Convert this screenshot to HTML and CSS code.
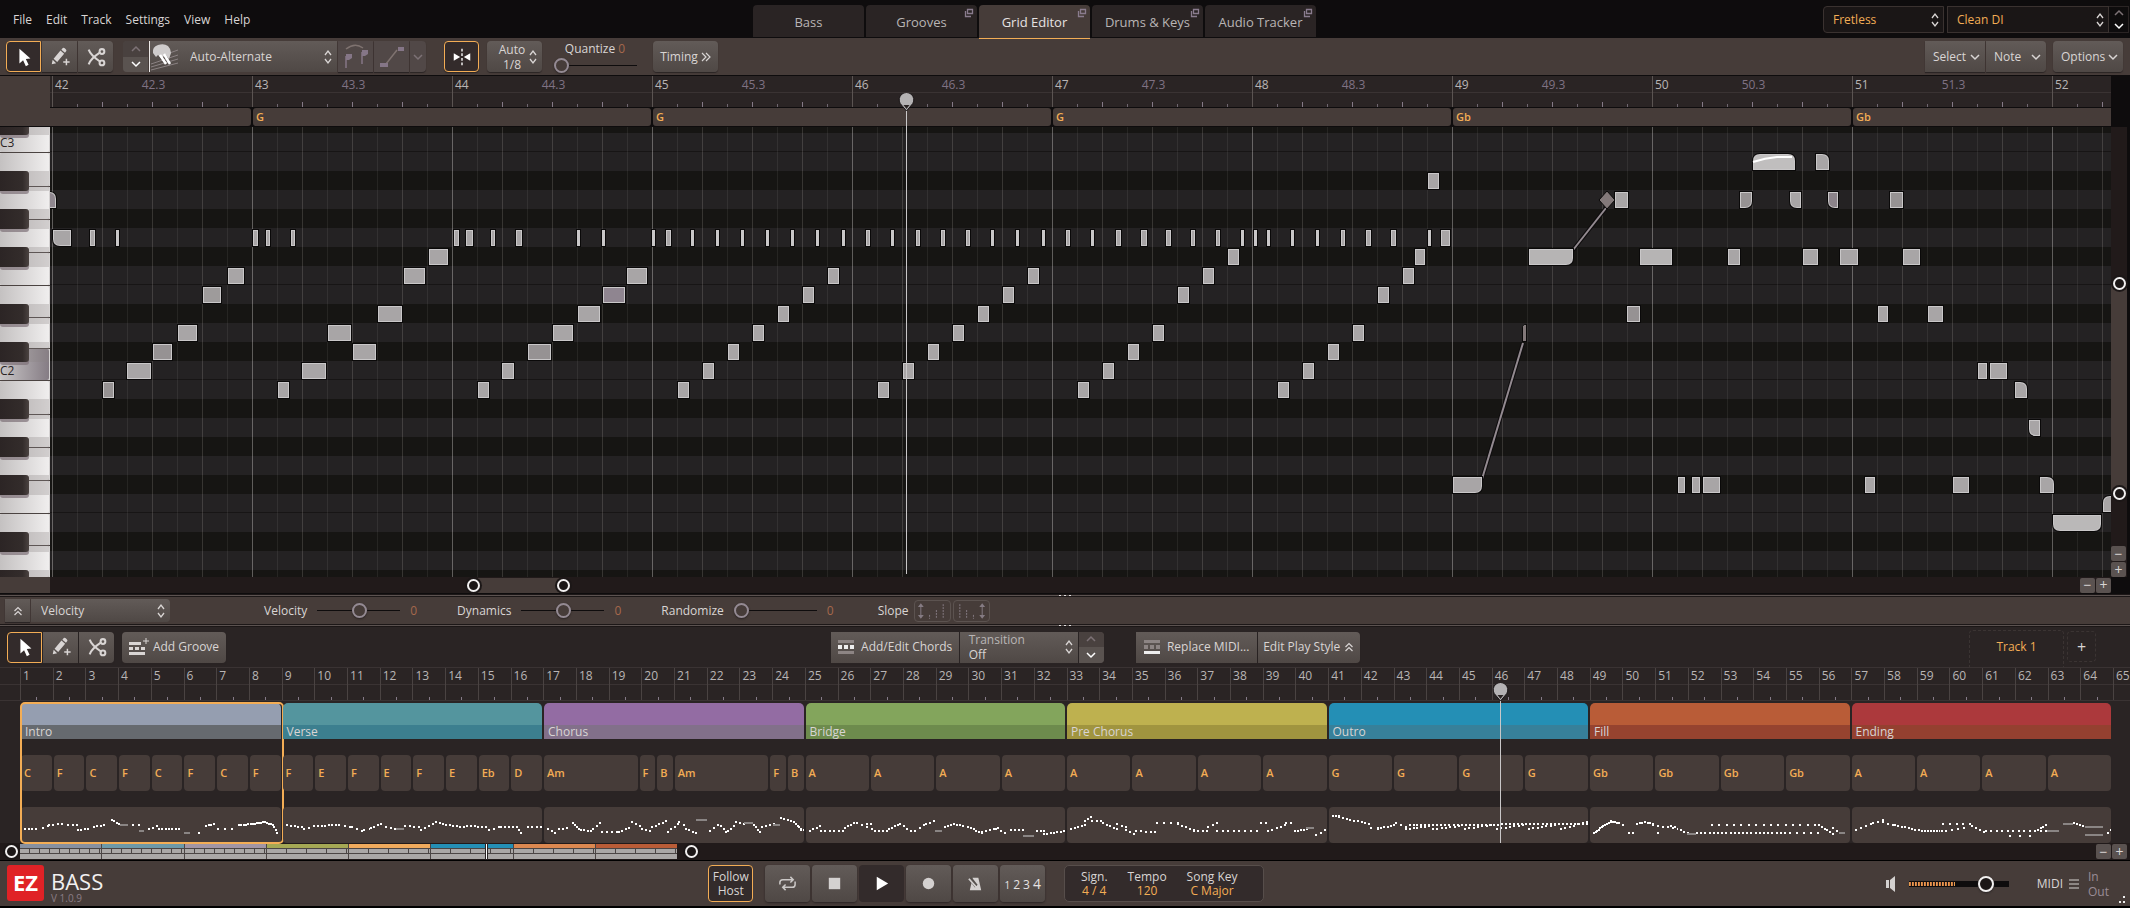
FILE: index.html
```html
<!DOCTYPE html>
<html lang="en">
<head>
<meta charset="utf-8">
<title>EZ Bass - Grid Editor</title>
<link rel="stylesheet" href="styles.css">
</head>
<body>
<svg class="defs" aria-hidden="true">
  <symbol id="i-arrow" viewBox="0 0 24 24"><path d="M7 3v16l4-3.500 3 6.500 3-1.500-3-6.300 5-.6z" fill="#fff"/></symbol>
  <symbol id="i-pencil" viewBox="0 0 24 24"><path d="M3 20l1-5 3.800 3.800zM5 13.800L12.500 5l4 3.500-7.600 9zM13.500 4L15 2.300q1-.8 2.200.2l1.300 1.200q1 1 .2 2.100L17.400 7.400z" fill="#d9d5d4"/><path d="M19 14v7M15.500 17.500h7" stroke="#d9d5d4" stroke-width="1.600"/></symbol>
  <symbol id="i-scissors" viewBox="0 0 24 24"><g fill="none" stroke="#d9d5d4" stroke-width="2.200"><path d="M4 4q2 6 13 13.500M4 20Q6 14 16.500 7"/><circle cx="18.500" cy="6" r="2.600"/><circle cx="18.500" cy="18.500" r="2.600"/></g></symbol>
  <symbol id="i-up" viewBox="0 0 12 12"><path d="M2 8l4-4 4 4" fill="none" stroke="currentColor" stroke-width="1.500"/></symbol>
  <symbol id="i-down" viewBox="0 0 12 12"><path d="M2 4l4 4 4-4" fill="none" stroke="currentColor" stroke-width="1.500"/></symbol>
  <symbol id="i-updown" viewBox="0 0 8 16"><path d="M1 6l3-4 3 4M1 10l3 4 3-4" fill="none" stroke="#d9d5d4" stroke-width="1.300"/></symbol>
  <symbol id="i-dblup" viewBox="0 0 10 10"><path d="M1.500 5L5 1.500 8.500 5M1.500 9L5 5.500 8.500 9" fill="none" stroke="#d9d5d4" stroke-width="1.200"/></symbol>
  <symbol id="i-dblright" viewBox="0 0 10 10"><path d="M1 1l4 4-4 4M5 1l4 4-4 4" fill="none" stroke="#d9d5d4" stroke-width="1.200"/></symbol>
  <symbol id="i-pop" viewBox="0 0 10 10"><path d="M3.500 1.500h5v4h-5zM1.500 3v5.500H7" fill="none" stroke="#8a7c8e" stroke-width="1.300"/></symbol>
  <symbol id="i-pin" viewBox="0 0 16 18"><path d="M8 18L1.700 10.500A7.300 7.300 0 1 1 14.300 10.500z" fill="#b4b2b3" stroke="#1a1617"/><path d="M5 12h6l-3 4z" fill="#2a2424"/></symbol>
</svg>

<header class="titlebar">
  <nav class="menu">
    <button>File</button><button>Edit</button><button>Track</button><button>Settings</button><button>View</button><button>Help</button>
  </nav>
  <div class="tabs" role="tablist">
    <button class="tab" role="tab">Bass</button>
    <button class="tab" role="tab">Grooves<svg class="pop"><use href="#i-pop"/></svg></button>
    <button class="tab active" role="tab" aria-selected="true">Grid Editor<svg class="pop"><use href="#i-pop"/></svg></button>
    <button class="tab" role="tab">Drums &amp; Keys<svg class="pop"><use href="#i-pop"/></svg></button>
    <button class="tab" role="tab">Audio Tracker<svg class="pop"><use href="#i-pop"/></svg></button>
  </div>
  <div class="presets">
    <div class="pick preset-a"><select aria-label="Instrument"><option>Fretless</option></select><svg class="ud"><use href="#i-updown"/></svg></div>
    <div class="pick preset-b"><select aria-label="Preset"><option>Clean DI</option></select><svg class="ud"><use href="#i-updown"/></svg></div>
    <div class="spin dark"><button class="off" aria-label="Previous preset"><svg class="chev"><use href="#i-up"/></svg></button><button aria-label="Next preset"><svg class="chev"><use href="#i-down"/></svg></button></div>
  </div>
</header>

<section class="toolbar">
  <div class="group">
    <button class="btn tool on" aria-label="Select tool"><svg class="ic"><use href="#i-arrow"/></svg></button>
    <button class="btn tool" aria-label="Pencil tool"><svg class="ic"><use href="#i-pencil"/></svg></button>
    <button class="btn tool" aria-label="Split tool"><svg class="ic"><use href="#i-scissors"/></svg></button>
  </div>
  <div class="group articulation">
    <div class="spin"><button class="off" aria-label="Previous articulation"><svg class="chev"><use href="#i-up"/></svg></button><button aria-label="Next articulation"><svg class="chev"><use href="#i-down"/></svg></button></div>
    <div class="pick stroke-pick">
      <svg class="hand" viewBox="0 0 30 28"><g stroke="#8b8283" stroke-width="1"><path d="M1 21l27-9M1 24l27-8M1 27l27-7M14 12l14-5"/></g><path d="M3 10q-1-6 5-8 6-2 10 1 3 3 3 7l-2 6-4-5-3 5-4-4-2 2z" fill="#cfcccc"/><path d="M10 12l6 9M14 11l6 10" stroke="#fff" stroke-width="2.500"/></svg>
      <select aria-label="Articulation"><option>Auto-Alternate</option></select><svg class="ud"><use href="#i-updown"/></svg>
    </div>
    <button class="btn dim" aria-label="Legato"><svg class="ic wide" viewBox="0 0 28 28"><path d="M4 6q9-7 17-1" fill="none" stroke="#7f7370" stroke-width="1.500"/><g stroke="#857687" stroke-width="1.500"><path d="M4 25V13M20 21V9"/></g><g fill="#857687"><path d="M4 11h6v4l-3 2H4zM20 7h6v4l-3 2h-3z"/></g></svg></button>
    <button class="btn dim" aria-label="Slide"><svg class="ic wide" viewBox="0 0 28 28"><path d="M8 21L19 7" stroke="#7f7370" stroke-width="1.500"/><path d="M2 20h8v4H2zM20 4h6v4h-6z" fill="#857687"/></svg></button>
    <button class="btn dim narrow" aria-label="More"><svg class="chev"><use href="#i-down"/></svg></button>
  </div>
  <button class="btn tool on snap" aria-label="Snap"><svg class="ic" viewBox="0 0 24 24"><path d="M3 8v8l7-4zM21 8v8l-7-4z" fill="#fff"/><path d="M12 3v18" stroke="#fff" stroke-width="1.500" stroke-dasharray="3 2"/></svg></button>
  <div class="btn stack auto"><label for="grid">Auto</label><select id="grid"><option>1/8</option></select><svg class="ud"><use href="#i-updown"/></svg></div>
  <div class="quantize"><label for="q">Quantize <output>0</output></label><input id="q" type="range" value="0"></div>
  <button class="btn timing">Timing <svg class="dbl"><use href="#i-dblright"/></svg></button>
  <div class="right">
    <div class="group"><button class="btn drop">Select<svg class="chev"><use href="#i-down"/></svg></button><button class="btn drop">Note<svg class="chev"><use href="#i-down"/></svg></button></div>
    <button class="btn drop options">Options<svg class="chev"><use href="#i-down"/></svg></button>
  </div>
</section>

<main class="editor">
  <div class="ruler-row"><div class="corner"></div><div class="ruler" id="ruler"></div><div class="gutter"></div></div>
  <div class="chord-row"><div class="chordline"><span class="seg first"></span><span class="seg">G</span><span class="seg">G</span><span class="seg">G</span><span class="seg">Gb</span><span class="seg last">Gb</span></div><div class="gutter"></div></div>
  <div class="roll-row">
    <svg class="keys" id="keys"></svg>
    <div class="roll"><svg class="notes" id="notes"></svg></div>
    <div class="vscroll">
      <div class="vthumb"><button class="knob" aria-label="Zoom top"></button><button class="knob" aria-label="Zoom bottom"></button></div>
      <div class="zoom col"><button>−</button><button>+</button></div>
    </div>
  </div>
  <div class="hscroll-row"><div class="corner"></div><div class="hscroll"><div class="hthumb"><button class="knob" aria-label="Zoom left"></button><button class="knob" aria-label="Zoom right"></button></div><div class="zoom"><button>−</button><button>+</button></div></div><div class="gutter"></div></div>
  <div class="playhead"><svg class="pin"><use href="#i-pin"/></svg></div>
</main>

<div class="splitter"><i></i><i></i><i></i></div>
<section class="velocity">
  <div class="group">
    <button class="btn vexp" aria-label="Expand"><svg class="dbl"><use href="#i-dblup"/></svg></button>
    <div class="pick vel-pick"><select aria-label="Lane"><option>Velocity</option></select><svg class="ud"><use href="#i-updown"/></svg></div>
  </div>
  <div class="param p1"><label for="v">Velocity</label><input id="v" type="range" value="51"><output>0</output></div>
  <div class="param"><label for="d">Dynamics</label><input id="d" type="range" value="51"><output>0</output></div>
  <div class="param p3"><label for="r">Randomize</label><input id="r" type="range" value="0"><output>0</output></div>
  <div class="slope"><span>Slope</span>
    <button aria-label="Slope up"><svg viewBox="0 0 36 20"><g stroke="#857b83" fill="#857b83"><path d="M6 4v12"/><path d="M3 6l3-4 3 4zM3 14l3 4 3-4z" stroke="none"/><path d="M15 14v4M22 9v9M29 3v15" stroke-dasharray="2 1"/></g></svg></button>
    <button aria-label="Slope down"><svg viewBox="0 0 36 20"><g stroke="#857b83" fill="#857b83"><path d="M29 4v12"/><path d="M26 6l3-4 3 4zM26 14l3 4 3-4z" stroke="none"/><path d="M6 3v15M13 9v9M20 14v4" stroke-dasharray="2 1"/></g></svg></button>
  </div>
</section>
<div class="splitter"><i></i><i></i><i></i></div>

<section class="song">
  <div class="songbar">
    <div class="left">
      <div class="group">
        <button class="btn tool on" aria-label="Select tool"><svg class="ic"><use href="#i-arrow"/></svg></button>
        <button class="btn tool" aria-label="Pencil tool"><svg class="ic"><use href="#i-pencil"/></svg></button>
        <button class="btn tool" aria-label="Split tool"><svg class="ic"><use href="#i-scissors"/></svg></button>
      </div>
      <button class="btn groove"><svg class="rows" viewBox="0 0 20 20"><path d="M0 5h12v3H0zM0 15h16v3H0zM0 10h4v3H0zM6 10h4v3H6zM12 10h4v3h-4z" fill="#d9d5d4"/><path d="M17 1v6M14 4h6" stroke="#d9d5d4"/></svg>Add Groove</button>
    </div>
    <div class="mid">
      <div class="group">
        <button class="btn chords"><svg class="rows" viewBox="0 0 20 20"><path d="M1 3h16v3H1zM1 14h16v3H1z" fill="#8d8584"/><path d="M1 8h4v4H1zM7 8h4v4H7zM13 8h4v4h-4z" fill="#eee"/></svg>Add/Edit Chords</button>
        <div class="btn stack transition"><label for="tr">Transition</label><select id="tr"><option>Off</option></select><svg class="ud"><use href="#i-updown"/></svg></div>
        <div class="spin"><button class="off" aria-label="Previous transition"><svg class="chev"><use href="#i-up"/></svg></button><button aria-label="Next transition"><svg class="chev"><use href="#i-down"/></svg></button></div>
      </div>
      <div class="group">
        <button class="btn replace"><svg class="rows" viewBox="0 0 20 20"><path d="M1 3h16v3H1zM1 8h4v4H1zM7 8h4v4H7zM13 8h4v4h-4z" fill="#8d8584"/><path d="M1 14h16v3H1z" fill="#eee"/></svg>Replace MIDI...</button>
        <button class="btn style">Edit Play Style<svg class="dbl"><use href="#i-dblup"/></svg></button>
      </div>
    </div>
    <div class="tracks"><button class="track">Track 1</button><button class="addtrack" aria-label="Add track">+</button></div>
  </div>
  <div class="arrange">
    <div class="bars" id="bars"></div>
    <div class="parts" id="parts"></div>
    <div class="playline"><svg class="pin"><use href="#i-pin"/></svg></div>
  </div>
  <div class="overview">
    <button class="knob" aria-label="View start"></button>
    <div class="mini" id="mini"></div>
    <button class="knob" aria-label="View end"></button>
    <div class="zoom"><button>−</button><button>+</button></div>
  </div>
</section>

<footer class="transport">
  <div class="brand"><span class="ez">EZ</span><div class="name"><strong>BASS</strong><small>V 1.0.9</small></div></div>
  <div class="controls">
    <button class="follow">Follow<br>Host</button>
    <div class="buttons">
      <button class="tbtn" aria-label="Loop"><svg viewBox="0 0 20 20"><path d="M2 11V9q0-3 3-3h11M18 8v3q0 3-3 3H5M13 3l3 3-3 3M8 11l-3 3 3 3" fill="none" stroke="#cbc8c7" stroke-width="1.600"/></svg></button>
      <button class="tbtn" aria-label="Stop"><svg viewBox="0 0 20 20"><path d="M4 4h12v12H4z" fill="#d4d1d0"/></svg></button>
      <button class="tbtn pressed" aria-label="Play"><svg viewBox="0 0 20 20"><path d="M5 3l12 7-12 7z" fill="#fff"/></svg></button>
      <button class="tbtn" aria-label="Record"><svg viewBox="0 0 20 20"><circle cx="10" cy="10" r="6" fill="#d4d1d0"/></svg></button>
      <button class="tbtn" aria-label="Metronome"><svg viewBox="0 0 20 20"><path d="M7 4h6l3 13H4z" fill="#d4d1d0"/><path d="M4 4l7 9" stroke="#55504d" stroke-width="4"/><path d="M3 5l8 9 2-2" fill="none" stroke="#d4d1d0" stroke-width="1.800"/></svg></button>
      <button class="tbtn count"><small>1</small>2 3 <b>4</b></button>
    </div>
    <dl class="info"><div><dt>Sign.</dt><dd>4 / 4</dd></div><div><dt>Tempo</dt><dd>120</dd></div><div><dt>Song Key</dt><dd>C Major</dd></div></dl>
  </div>
  <div class="output">
    <svg class="speaker" viewBox="0 0 12 16"><path d="M1 4h3v8H1zM5 4l5-4v16l-5-4z" fill="#d4d1d0"/></svg>
    <input class="volume" type="range" value="82" aria-label="Volume">
    <span class="midi">MIDI</span>
    <svg class="burger" viewBox="0 0 10 10"><path d="M0 1h10M0 5h10M0 9h10" stroke="#d4d1d0" stroke-width="1.200"/></svg>
    <div class="io"><span>In</span><span>Out</span></div>
  </div>
  <svg class="grip" viewBox="0 0 10 8"><path d="M6 0h2v2H6zM2 5h2v2H2zM6 5h2v2H6z" fill="#eee"/></svg>
</footer>
<script src="script.js"></script>
</body>
</html>
```
FILE: styles.css
```css
:root {
  --bar-bg: #463c39;
  --dark: #2a2424;
  --scroll: #211a1a;
  --accent: #f3ad55;
  --text: #d9d5d4;
  --btn: linear-gradient(#625b58, #4f4845);
}
* { box-sizing: border-box; }
body { margin: 0; height: 100vh; display: flex; flex-direction: column; background: #0e0c0d; color: var(--text); font: 500 12px/16px "Open Sans", "Noto Sans", sans-serif; overflow: hidden; border-bottom: 2px solid #000; }
button, select, input { font: inherit; color: inherit; margin: 0; padding: 0; border: 0; background: none; border-radius: 0; }
select { appearance: none; outline: 0; min-width: 0; flex: 1; }
.defs { width: 0; height: 0; position: absolute; }
.ic { width: 22px; height: 22px; }
.ic.wide { width: 28px; height: 28px; }
.chev { width: 12px; height: 12px; flex: none; }
.ud { width: 8px; height: 16px; flex: none; pointer-events: none; }
.dbl { width: 10px; height: 10px; flex: none; }
.group { display: flex; gap: 1px; }
.group > :first-child { border-radius: 4px 0 0 4px; }
.group > :last-child { border-radius: 0 4px 4px 0; }
.btn { display: flex; align-items: center; justify-content: center; height: 31px; background: var(--btn); border-radius: 4px; box-shadow: 0 1px 1px #2a2424; white-space: nowrap; }
.group > .btn { border-radius: 0; }
.tool { width: 35px; }
.on { background: #332b2b; border: 1px solid var(--accent); }
.group > .on { border-radius: 4px 0 0 4px; }
.group > .btn:last-child { border-radius: 0 4px 4px 0; }
.pick { display: flex; align-items: center; }
.spin { display: flex; flex-direction: column; width: 25px; height: 31px; overflow: hidden; background: #4f4845; }
.spin button { flex: 1; display: grid; place-items: center; background: #5a5350; color: #fff; }
.spin .off { background: #49413f; color: #7d7276; }

.titlebar { display: grid; grid-template-columns: 35.35% auto 1fr; height: 38px; flex: none; }
.menu { display: flex; gap: 14px; padding: 0 13px; align-items: center; }
.tabs { display: flex; gap: 2px; padding-top: 5px; }
.tab { position: relative; width: 111px; height: 32px; background: var(--dark); border-radius: 4px 4px 0 0; font-size: 13px; color: #b9b5b5; padding-top: 2px; }
.tab.active { height: 34px; background: var(--bar-bg); border-bottom: 1px solid var(--accent); color: #e6e2e2; padding-top: 1px; }
.pop { position: absolute; top: 3px; right: 3px; width: 10px; height: 10px; }
.presets { display: flex; justify-content: flex-end; padding: 6px 1px 0 0; color: var(--accent); }
.presets .pick { height: 27px; border: 1px solid #3a3230; background: #1a1616; padding: 0 4px 0 9px; }
.preset-a { width: 121px; border-radius: 4px 0 0 4px; margin-right: 3px; }
.preset-b { width: 162px; }
.spin.dark { width: 20px; height: 27px; background: none; border: 1px solid #2a2424; border-left: 0; }
.spin.dark button { background: #0e0c0d; }

.toolbar { display: flex; align-items: center; height: 38px; flex: none; background: var(--bar-bg); padding: 0 7px 0 6px; border-bottom: 1px solid #0e0c0d; }
.articulation { margin-left: 10px; }
.stroke-pick { width: 188px; height: 31px; background: var(--btn); border-left: 1px solid #ece9e8; padding-right: 5px; gap: 10px; }
.hand { width: 30px; height: 28px; }
.dim { background: #514847; width: 35px; }
.dim.narrow { width: 16px; color: #7d7276; }
.snap { margin-left: 18px; }
.stack { display: grid; grid-template-columns: 1fr 8px; align-items: center; line-height: 15px; align-content: center; }
.stack .ud { grid-area: 1 / 2 / 3 / 3; }
.stack select { line-height: 15px; }
.auto { width: 55px; margin-left: 8px; padding: 0 5px 0 8px; text-align: center; }
.auto select { text-align: center; text-align-last: center; }
.quantize { width: 80px; margin-left: 13px; display: flex; flex-direction: column; align-items: center; gap: 1px; }
output { color: #a5684c; }
.timing { width: 65px; gap: 3px; margin-left: 18px; }
.right { margin-left: auto; display: flex; gap: 7px; }
.drop { width: 60px; justify-content: space-between; padding: 0 4px 0 8px; }
.options { width: 70px; }

input[type=range] { appearance: none; width: 83px; height: 15px; background: linear-gradient(#0e0c0d, #0e0c0d) center / 100% 1px no-repeat; }
input[type=range]::-webkit-slider-thumb { appearance: none; width: 15px; height: 15px; border-radius: 8px; border: 2px solid #948a93; background: #463c39; box-shadow: 0 1px 2px #2a2424; }

.editor { position: relative; flex: 1; min-height: 0; display: flex; flex-direction: column; }
.corner { width: 50px; flex: none; background: var(--bar-bg); }
.gutter { width: 19px; flex: none; background: #0e0c0d; }
.ruler-row { display: flex; height: 32px; flex: none; }
.ruler { flex: 1; display: flex; overflow: hidden; padding-left: 2px; border-bottom: 1px solid #0e0c0d; background: linear-gradient(#3a3333, #3a3333) 0 16px / 100% 1px no-repeat, var(--dark); }
.bar { flex: 0 0 200px; display: grid; grid-template-columns: 1fr auto 1fr; border-left: 1px solid #5b5452; padding: 1px 0 0 2px; color: #b9b5b5; background: linear-gradient(90deg, transparent 25px, #6f6670 25px, #6f6670 26px, transparent 26px) -1px 100% / 50px 3px repeat-x, linear-gradient(90deg, #857a87 1px, transparent 1px) -1px 100% / 50px 5px repeat-x; }
.bar i { font-style: normal; color: #7f7284; }
.chord-row { display: flex; height: 19px; flex: none; background: #0e0c0d; }
.chordline { flex: 1; min-width: 0; display: flex; gap: 2px; overflow: hidden; padding-bottom: 1px; }
.seg { flex: 0 0 398px; background: var(--bar-bg); border-radius: 3px; padding: 1px 3px; color: var(--accent); font-weight: 600; font-size: 11px; }
.seg.first { flex-basis: 251px; border-radius: 0 3px 3px 0; }
.seg.last { flex: 1; border-radius: 3px 0 0 3px; }
.roll-row { flex: 1; min-height: 0; display: flex; }
.keys { width: 50px; height: 100%; flex: none; background: #d6d3d3; font-size: 12px; }
.roll { flex: 1; min-width: 0; background:
  linear-gradient(90deg, rgba(255,255,255,.2) 1px, transparent 1px) 2px 0 / 200px 100%,
  linear-gradient(90deg, rgba(255,245,235,.08) 1px, transparent 1px) 2px 0 / 50px 100%,
  linear-gradient(90deg, rgba(255,245,235,.07) 1px, transparent 1px) 2px 0 / 25px 100%,
  linear-gradient(#242223 18px, #171515 18px, #171515 19px, #242223 19px, #242223 38px, #161513 38px, #161513 57px, #242223 57px, #242223 76px, #161513 76px, #161513 95px, #242223 95px, #242223 114px, #161513 114px, #161513 133px, #242223 133px, #242223 151px, #171515 151px, #171515 152px, #242223 152px, #242223 171px, #161513 171px, #161513 190px, #242223 190px, #242223 209px, #161513 209px) 0 6px / 100% 228px; }
.notes { display: block; width: 100%; height: 100%; }
.vscroll { width: 19px; flex: none; background: var(--scroll); display: flex; flex-direction: column; justify-content: space-between; border-right: 3px solid #0e0c0d; }
.vthumb { margin-top: 150px; height: 223px; background: var(--bar-bg); display: flex; flex-direction: column; justify-content: space-between; align-items: center; border-radius: 8px; }
.knob { flex: none; width: 13px; height: 13px; border-radius: 7px; border: 2px solid #f2f0f0; background: #1c1717; box-shadow: 0 0 0 2px #1c1717; }
.zoom { display: flex; gap: 1px; }
.zoom.col { flex-direction: column; }
.zoom button { width: 15px; height: 15px; line-height: 14px; background: #5a5250; border-radius: 2px; font-size: 14px; }
.hscroll-row { display: flex; height: 17px; flex: none; border-bottom: 1px solid #0e0c0d; }
.hscroll { flex: 1; background: var(--scroll); display: flex; justify-content: space-between; align-items: center; }
.hthumb { margin-left: 417px; width: 103px; height: 15px; display: flex; align-items: center; justify-content: space-between; background: var(--bar-bg); border-radius: 8px; }
.playhead { position: absolute; left: 906px; top: 33px; bottom: 20px; width: 1px; background: #c9c7c8; }
.pin { position: absolute; left: -8px; top: -16px; width: 17px; height: 18px; }

.splitter { flex: none; height: 3px; display: flex; gap: 3px; align-items: center; justify-content: center; background: linear-gradient(#5b5250, #5b5250) 0 1px / 100% 1px no-repeat, #1c1717; }
.splitter i { width: 2px; height: 1px; background: #e6e2e2; }
.velocity { flex: none; display: flex; align-items: center; height: 27px; background: var(--bar-bg); padding-left: 5px; }
.vexp { width: 25px; height: 23px; }
.vel-pick { width: 139px; height: 23px; background: var(--btn); padding: 0 5px 0 10px; }
.param { display: flex; align-items: center; gap: 10px; margin-left: 40px; }
.param.p1 { margin-left: 94px; }
.slope { display: flex; align-items: center; gap: 2px; margin-left: 44px; }
.slope span { margin-right: 3px; }
.slope button { width: 37px; height: 22px; border: 1px solid #5c5350; border-radius: 4px; }
.slope svg { display: block; width: 35px; height: 20px; }

.song { flex: none; background: var(--dark); }
.songbar { display: grid; grid-template-columns: 39% auto 1fr; height: 40px; align-items: center; }
.left { display: flex; gap: 8px; padding-left: 7px; }
.mid { display: flex; gap: 32px; }
.rows { width: 20px; height: 20px; flex: none; }
.groove { width: 104px; gap: 4px; }
.chords { width: 128px; gap: 4px; }
.transition { width: 118px; padding: 0 5px 0 9px; line-height: 14px; }
.transition label { color: #b9b5b5; }
.replace { width: 121px; gap: 4px; }
.style { width: 102px; gap: 4px; }
.tracks { display: flex; justify-content: flex-end; gap: 3px; padding-right: 34px; align-self: end; }
.track { width: 95px; height: 37px; border: 1px dashed #3b3433; border-bottom: 0; border-radius: 4px 4px 0 0; color: var(--accent); padding-bottom: 4px; }
.addtrack { width: 29px; height: 31px; border: 1px dashed #3b3433; border-radius: 4px; font-size: 16px; margin-top: 1px; }
.arrange { position: relative; padding-left: 21px; }
.bars { display: flex; height: 34px; margin-left: -21px; padding-left: 20px; border: solid #3a3333; border-width: 1px 0; overflow: hidden; background: linear-gradient(#3a3333, #3a3333) 0 16px / 100% 1px no-repeat; }
.bars .cells { flex: 1; display: grid; grid-template-columns: repeat(64, minmax(0, 1fr)); }
.bars span { border-left: 1px solid #4a4342; padding-left: 2px; color: #b9b5b5; white-space: nowrap; background: linear-gradient(#857a87, #857a87) 50% 100% / 1px 3px no-repeat; }
.bars .end { width: 17px; flex: none; background: none; }
.parts { display: grid; grid-template-columns: repeat(8, minmax(0, 1fr)); margin-right: 17px; padding-top: 2px; }
.part { padding-right: 2px; border-radius: 4px; }
.part.selected { outline: 2px solid var(--accent); outline-offset: -1px; border-radius: 4px; }
.head { height: 36px; display: flex; flex-direction: column; justify-content: flex-end; border-radius: 5px 5px 0 0; background: var(--c); }
.head span { height: 14px; line-height: 13px; padding-left: 4px; background: var(--l); }
.chordset { display: grid; gap: 2px; height: 36px; margin: 16px 0; font-weight: 600; font-size: 11px; }
.chordset span { background: var(--bar-bg); border-radius: 4px; padding: 10px 0 0 3px; color: var(--accent); }
.midiclip { display: block; width: 100%; height: 36px; background: var(--bar-bg); border-radius: 4px; shape-rendering: crispEdges; }
.playline { position: absolute; left: 70.4%; top: 32px; bottom: 0; width: 1px; background: #c9c7c8; }
.overview { display: flex; align-items: center; height: 18px; background: var(--scroll); padding-left: 5px; border-bottom: 1px solid #000; gap: 2px; }
.overview .zoom { margin-left: auto; padding-right: 3px; }
.mini { position: relative; width: 657px; display: grid; grid-template-columns: repeat(8, 1fr); gap: 0 1px; background: #4b4544; }
.mini i { height: 4px; background: var(--c); margin-bottom: 1px; }
.mini b { height: 4px; grid-row: 2; background: repeating-linear-gradient(90deg, #aaa7a6 0, #aaa7a6 var(--w), #4b4544 var(--w), #4b4544 calc(var(--w) + 1px)); margin-bottom: 1px; }
.mini u { height: 5px; grid-row: 3; background: #aaa7a6; }
.mini::after { content: ""; position: absolute; left: 466px; top: 0; bottom: 0; width: 1px; background: #fff; outline: 1px solid #2a2424; }
.overview .mini + .knob { margin-left: 6px; }

.transport { position: relative; flex: none; height: 45px; background: var(--bar-bg); display: grid; grid-template-columns: 33.25% auto 1fr; align-items: center; }
.brand { display: flex; gap: 7px; padding-left: 7px; }
.ez { width: 37px; height: 36px; background: #e02226; border-radius: 3px; color: #fff; font: bold 22px/35px "Open Sans", sans-serif; text-align: center; }
.name { display: flex; flex-direction: column; }
.name strong { font: 22px/26px "Open Sans", sans-serif; color: #f2f0f0; padding-top: 3px; height: 29px; }
.name small { font-size: 10px; line-height: 9px; color: #8a7c86; }
.controls { display: flex; align-items: center; }
.follow { width: 45px; height: 37px; border: 1px solid var(--accent); border-radius: 4px; background: #332b2b; line-height: 14px; }
.buttons { display: flex; gap: 2px; margin: 0 19px 0 12px; }
.tbtn { width: 45px; height: 37px; background: var(--btn); border-radius: 4px; box-shadow: 0 1px 2px #2a2424; display: grid; place-items: center; }
.tbtn svg { width: 19px; height: 19px; }
.tbtn.pressed { background: #332b2b; box-shadow: none; }
.tbtn.count { display: flex; align-items: baseline; justify-content: center; gap: 3px; line-height: 37px; color: #e6e2e2; }
.count small { font-size: 10px; }
.count b { font-weight: 400; font-size: 14px; }
.info { margin: 0; width: 200px; height: 37px; display: flex; justify-content: center; gap: 20px; background: #332b2b; border: 1px solid #574e4b; border-radius: 5px; text-align: center; padding: 4px 10px 0 0; line-height: 14px; }
.info dd { margin: 0; color: var(--accent); }
.output { display: flex; align-items: center; justify-content: flex-end; padding-right: 22px; }
.speaker { width: 12px; height: 16px; margin-right: 12px; }
input.volume { width: 100px; height: 16px; background: repeating-linear-gradient(90deg, #f3ad55 0, #c2653a 2px, #1c1717 2px, #1c1717 3px) 0 50% / 46px 4px no-repeat, linear-gradient(#0e0c0d, #0e0c0d) center / 100% 6px no-repeat; }
input.volume::-webkit-slider-thumb { width: 16px; height: 16px; border-color: #f2f0f0; background: #1c1717; }
.midi { margin: 0 6px 0 28px; }
.burger { width: 10px; height: 10px; margin-right: 9px; }
.io { display: flex; flex-direction: column; color: #9a8c96; line-height: 15px; width: 20px; }
.grip { position: absolute; right: 3px; bottom: 2px; width: 10px; height: 8px; }
```
FILE: script.js
```js
const NS = "http://www.w3.org/2000/svg";
function el(parent, name, attrs, text) {
  const n = document.createElementNS(NS, name);
  for (const k in attrs) n.setAttribute(k, attrs[k]);
  if (text) n.textContent = text;
  parent.appendChild(n);
  return n;
}

/* Piano-roll ruler */
const ruler = document.getElementById("ruler");
for (let b = 42; b < 53; b++) {
  ruler.insertAdjacentHTML("beforeend", `<div class="bar"><span>${b}</span>${b < 52 ? `<i>${b}.3</i>` : ""}</div>`);
}

/* Keyboard: y is measured from the top of the roll */
const keys = document.getElementById("keys");
keys.insertAdjacentHTML("beforeend", '<defs><linearGradient id="wk"><stop offset="0" stop-color="#c4c1c1"/><stop offset="1" stop-color="#f0eeee"/></linearGradient><linearGradient id="pk"><stop offset="0" stop-color="#c9c6c7"/><stop offset="1" stop-color="#857c84"/></linearGradient><linearGradient id="bk"><stop offset="0" stop-color="#2b2424"/><stop offset=".8" stop-color="#332c2b"/><stop offset="1" stop-color="#4b4341"/></linearGradient></defs>');
const edges = [-8, 25, 59, 92, 125, 158, 190, 221, 253, 287, 320, 353, 386, 418, 450];
for (let i = 0; i < edges.length - 1; i++) {
  el(keys, "rect", { x: 0, y: edges[i] + 1, width: 49, height: edges[i + 1] - edges[i] - 1, rx: 2, fill: i === 7 ? "url(#pk)" : "url(#wk)" });
  el(keys, "rect", { x: 0, y: edges[i + 1], width: 50, height: 1, fill: "#4b4341" });
}
for (const y of [-12, 44, 82, 120, 177, 215, 272, 310, 348, 405, 443]) {
  el(keys, "rect", { x: 29, y: y, width: 20, height: 20, fill: "#8a8585", opacity: .3 });
  el(keys, "rect", { x: 0, y: y + 2, width: 29, height: 21, rx: 3, fill: "#7d7078", opacity: .7 });
  el(keys, "rect", { x: -3, y: y, width: 32, height: 20, rx: 3, fill: "url(#bk)" });
}
el(keys, "text", { x: 0, y: 20, fill: "#2a2424" }, "C3");
el(keys, "text", { x: 0, y: 248, fill: "#2a2424" }, "C2");

/* Notes: [x, width, row, rounded corners, fill] */
const notes = [];
const add = (row, list) => list.forEach(n => notes.push([n[0], n[1], row, n[2] || "", n[3] || "#a8a5a6"]));
const run = (x, rows) => rows.forEach((r, i) => r && add(r, [[x + i * 25, 13]]));
add(5, [[52, 20, "c"], [89, 7], [115, 5], [252, 7], [265, 6], [290, 6], [453, 7], [465, 9], [490, 6], [515, 8], [576, 5], [601, 5], [651, 5], [665, 7], [690, 5],
  [715, 5], [740, 5], [765, 5], [790, 5], [815, 5], [841, 5], [865, 6], [890, 5], [915, 6], [940, 6], [965, 6], [990, 5], [1015, 5], [1041, 5], [1065, 6], [1090, 5], [1115, 7], [1140, 8], [1165, 7], [1190, 6], [1215, 6], [1240, 5], [1253, 5], [1266, 5], [1290, 5], [1315, 5], [1340, 6], [1365, 7], [1390, 7], [1427, 5], [1440, 11]]);
add(3, [[44, 13, "b", "#8f878f"], [1614, 15], [1739, 14, "c2", "#969293"], [1789, 13, "c"], [1827, 12, "c", "#8b838a"], [1889, 15, "", "#969293"]]);
add(13, [[102, 13, "", "#969293"], [277, 13], [477, 13]]);
add(12, [[126, 26], [301, 26], [501, 14]]);
add(11, [[152, 21, "", "#969293"], [352, 25], [527, 25, "", "#969293"]]);
add(10, [[177, 21], [327, 25], [552, 22]]);
add(9, [[377, 26], [577, 24]]);
add(8, [[202, 20, "", "#9e9b9b"], [602, 24, "", "#8f8590"]]);
add(7, [[227, 18], [403, 23], [626, 22]]);
add(6, [[428, 21]]);
run(677, [13, 12, 11, 10, 9, 8, 7]);
run(877, [13, 12, 11, 10, 9, 8, 7]);
run(1077, [13, 12, 11, 10, 8, 7, 6]);
run(1277, [13, 12, 11, 10, 8, 7]);
add(6, [[1414, 12]]);
add(2, [[1427, 13]]);
add(18, [[1452, 31, "c2"], [1677, 9], [1691, 10], [1702, 19], [1864, 12], [1952, 18], [2039, 16, "b"]]);
add(10, [[1522, 5, "a", "#83797a"]]);
add(6, [[1528, 46, "c2", "#b6b4b4"], [1639, 34, "", "#b6b4b4"], [1727, 14], [1802, 17], [1839, 20], [1902, 19]]);
add(9, [[1626, 15, "", "#969293"], [1877, 12], [1927, 17]]);
add(1, [[1752, 44, "ab", "#c0bebe"], [1815, 15, "b"]]);
add(12, [[1977, 11], [1989, 19]]);
add(13, [[2014, 14, "b"]]);
add(15, [[2028, 13, "c"]]);
add(19, [[2102, 14, "a"]]);
add(20, [[2052, 50, "cc2", "#bab8b8"]]);

function shape(x, y, w, h, c, r) {
  r = Math.min(r, w);
  const a = c.includes("a") ? r : 0, b = c.includes("b") ? r : 0;
  const br = c.includes("c2") ? r : 0;
  const bl = c === "c" || c.startsWith("cc") ? r : 0;
  return `M${x + a} ${y}H${x + w - b}q${b} 0 ${b} ${b}V${y + h - br}q0 ${br} ${-br} ${br}H${x + bl}q${-bl} 0 ${-bl} ${-bl}V${y + a}q0 ${-a} ${a} ${-a}z`;
}
const g = el(document.getElementById("notes"), "g", { transform: "translate(-50 6)" });
function slide(x1, y1, x2, y2) {
  el(g, "line", { x1, y1, x2, y2, stroke: "#0e0c0d", "stroke-width": 4 });
  el(g, "line", { x1, y1, x2, y2, stroke: "#938a90", "stroke-width": 2 });
}
slide(1482, 346, 1523, 210);
slide(1573, 117, 1606, 75);
for (const [x, w, row, c, fill] of notes) {
  const y = row * 19 + 1;
  el(g, "path", { d: shape(x, y, w, 18, c, 8), fill: "#0a0909" });
  el(g, "path", { d: shape(x + 1, y + 1, w - 2, 16, c, 7), fill: "#c9c7c8" });
  if (w > 5) el(g, "path", { d: shape(x + 2, y + 2, w - 4, 14, c, 6), fill });
  else if (c) el(g, "path", { d: shape(x + 1, y + 1, w - 2, 16, c, 3), fill });
}
el(g, "path", { d: "M1607 58l8 9-8 9-8-9z", fill: "#83797a", stroke: "#0a0909" });
el(g, "path", { d: "M1753 29q12-4 24-5h15", fill: "none", stroke: "#fff", "stroke-width": 2 });

/* Song ruler */
const bars = document.getElementById("bars");
let cells = "";
for (let i = 1; i < 65; i++) cells += `<span>${i}</span>`;
bars.innerHTML = `<div class="cells">${cells}</div><span class="end">65</span>`;

/* Song parts. Clip runs: x1, y1, x2, y2, dots; no dot count draws a held note */
const parts = [
  ["Intro", "#959eb0", "#666a6f", "C F C F C F C F", "3,22,14,22,4 21,21,26,19,2 27,18,40,17,4 46,18,55,18,3 56,23,66,22,4 72,20,82,18,4 91,13,98,17,4 100,18,108,18 112,18,118,18,2 119,24,124,24 128,22,136,19,3 138,22,158,22,7 164,26,170,26 178,26,179,26,1 185,19,193,17,4 197,22,211,22,3 218,18,232,17,7 232,17,244,15,7 244,15,252,18,5 253,20,256,26,3"],
  ["Verse", "#54959e", "#3c7f8f", "F E F E F E Eb D", "3,18,18,20,5 20,22,30,19,3 34,19,52,18,6 55,18,66,20,3 68,20,78,24,3 80,23,86,22,2 88,21,98,17,4 103,20,112,22,3 114,22,122,22 122,19,136,20,4 138,23,150,17,4 153,15,160,17,3 163,18,181,20,6 184,19,203,20,6 206,23,216,20,3 218,20,234,20,5 236,23,238,26,2 245,20,258,20,4"],
  ["Chorus", "#936ca3", "#82708a", "Am:3 F:.5 B:.5 Am:3 F:.5 B:.5", "3,22,10,26,3 14,22,22,21,3 28,16,34,22,4 36,23,46,24,4 48,22,55,16,3 57,25,72,25,4 74,25,84,21,4 88,15,96,19,3 98,22,106,24,3 108,20,122,14,5 124,25,134,17,4 135,15,140,18,2 142,22,152,26,4 153,13,164,13 166,24,174,18,3 177,19,182,25,3 184,24,190,19,3 192,15,200,17,3 201,16,210,16 210,18,216,25,4 218,20,230,17,4 230,18,237,18 237,11,250,15,5 250,15,257,22,5 257,23,260,23,2"],
  ["Bridge", "#83a55c", "#6d8b4d", "A A A A", "3,24,13,19,4 14,24,36,24,6 38,21,47,16,4 50,16,65,22,4 60,17,64,17,2 68,24,80,24,4 82,22,92,18,4 94,17,105,24,4 109,24,118,18,3 120,17,128,14,3 130,24,137,24 139,20,148,17,4 148,17,157,19,4 162,20,176,26,6 176,25,192,21,5 190,22,199,26,3 205,23,217,23,4 218,29,229,29 231,24,238,24,3 238,27,258,24,7"],
  ["Pre Chorus", "#beb14f", "#a0943f", "A A A A", "3,22,17,18,5 17,14,23,10,3 24,14,33,14,3 35,16,49,22,5 49,17,58,20,3 58,23,66,27,3 68,24,88,25,5 90,16,111,16,4 111,17,127,23,5 127,24,140,24,4 141,20,150,16,3 150,24,178,24,6 178,24,190,24,3 194,16,199,16,2 201,24,218,18,5 219,16,224,16,2 228,24,240,22,5 240,21,248,21 249,28,258,23,3"],
  ["Outro", "#248fb5", "#37809a", "G G G G", "3,9,9,9,3 9,10,39,17,9 41,21,48,21,2 48,22,64,18,6 66,16,76,20,3 76,22,100,19,7 80,18,258,17,45 104,22,130,19,7 136,22,162,18,7 168,22,194,18,7 200,22,226,18,7 232,22,258,15,7"],
  ["Fill", "#b95c37", "#96432f", "Gb Gb Gb Gb", "3,26,12,19,7 14,18,20,15,4 20,14,28,16,5 32,18,33,18,1 38,26,42,26,2 46,17,54,15,4 54,15,62,17,4 62,18,82,21,5 67,26,68,26,1 80,19,98,26,6 98,27,107,27 107,26,195,26,22 122,18,225,18,15 200,26,228,26,5 229,18,243,27,6 243,21,250,26,3 250,26,256,26"],
  ["Ending", "#ac393c", "#944030", "A A A A", "3,23,18,17,4 20,16,30,13,3 30,15,40,18,3 42,18,69,24,9 69,24,90,24,8 91,17,118,17,5 94,24,112,21,4 120,19,132,25,4 134,24,194,24,12 158,29,178,29,3 183,24,194,18,5 196,24,208,24 212,17,222,17 222,16,234,20,5 234,20,252,20 234,28,252,28 256,26,259,23,2"]
];
const host = document.getElementById("parts");
parts.forEach(([name, c, l, chords, clip], i) => {
  const part = document.createElement("div");
  part.className = i ? "part" : "part selected";
  const list = chords.split(" ").map(s => s.split(":"));
  const cols = list.map(([, f]) => `minmax(0, ${(f || 1) * 2}fr)`).join(" ");
  part.innerHTML = `<div class="head" style="--c:${c};--l:${l}"><span>${name}</span></div><div class="chordset" style="grid-template-columns:${cols}">` +
    list.map(([n]) => `<span>${n}</span>`).join("") + "</div>";
  const svg = el(part, "svg", { class: "midiclip", viewBox: "0 0 261 36", preserveAspectRatio: "none" });
  for (const seg of clip.split(" ")) {
    const [x1, y1, x2, y2, n] = seg.split(",").map(Number);
    if (!n) { el(svg, "rect", { x: x1, y: y1 - 1, width: x2 - x1, height: 2, fill: "#8a8584" }); continue; }
    for (let k = 0; k < n; k++) {
      const t = n > 1 ? k / (n - 1) : 0;
      el(svg, "rect", { x: Math.round(x1 + (x2 - x1) * t), y: Math.round(y1 + (y2 - y1) * t) - 1, width: 2, height: 2, fill: "#fff" });
    }
  }
  host.appendChild(part);
});

/* Overview strip */
const mini = document.getElementById("mini");
const miniColours = ["#8790a0", "#6d99a8", "#a295a4", "#a5a854", "#f0aa5c", "#248fb5", "#dc8850", "#b95c37"];
mini.innerHTML = miniColours.map(c => `<i style="--c:${c}"></i>`).join("") +
  miniColours.map((c, i) => `<b style="--w:${i < 3 ? 9 : 19}px"></b>`).join("") + miniColours.map(() => "<u></u>").join("");
```
